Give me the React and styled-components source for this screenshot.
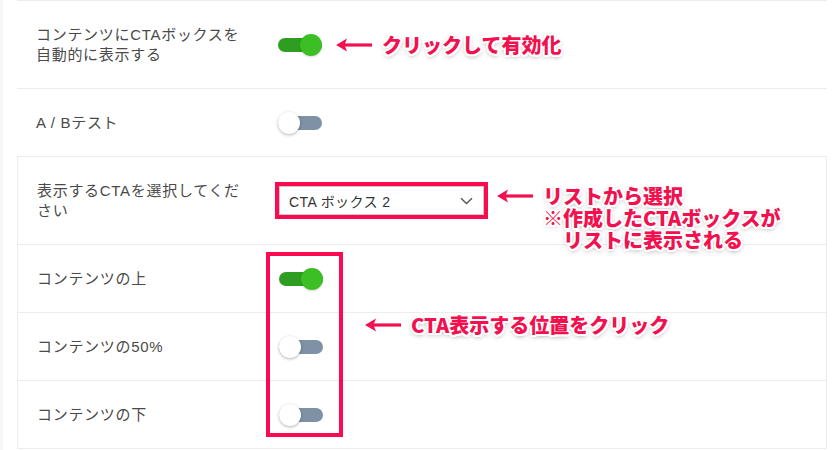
import React from 'react';
import styled, { createGlobalStyle } from 'styled-components';

const GlobalStyle = createGlobalStyle`
  html, body {
    margin: 0;
    padding: 0;
    background: #fff;
  }
  body {
    font-family: "Liberation Sans", "Noto Sans CJK JP", sans-serif;
  }
`;

const Page = styled.div`
  position: relative;
  display: flex;
  width: 840px;
  height: 450px;
  overflow: hidden;
  background: #fff;
`;

const SideStrip = styled.div`
  width: 3px;
  flex-shrink: 0;
  background: #f5f6f9;
`;

const Main = styled.div`
  margin-left: 14px;
  width: 810px;
`;

const Row = styled.div`
  display: flex;
  align-items: center;
  box-sizing: border-box;
  height: ${p => p.$h}px;
  padding-left: 19px;
  border-top: 1px solid #ececec;
`;

const Group = styled.div`
  border: 1px solid #ececec;
  & > ${Row}:first-child {
    border-top: none;
  }
`;

const Label = styled.div`
  width: 212px;
  margin-right: 30px;
  flex-shrink: 0;
  font-size: 15px;
  line-height: 20px;
  letter-spacing: 0.7px;
  color: #4a4a4a;
`;

const Track = styled.div`
  position: relative;
  width: 44px;
  height: 14px;
  border-radius: 7px;
  background: ${p => (p.$on ? '#2f9d20' : '#7e91a5')};
`;

const Knob = styled.div`
  position: absolute;
  top: -4px;
  left: ${p => (p.$on ? '22px' : '0')};
  width: 22px;
  height: 22px;
  border-radius: 50%;
  background: ${p => (p.$on ? '#3bbf25' : '#fff')};
  box-shadow: ${p => (p.$on ? '0 1px 2px rgba(0,0,0,0.15)' : '0 1px 3px rgba(0,0,0,0.3)')};
`;

const Toggle = ({ on }) => (
  <Track $on={on}>
    <Knob $on={on} />
  </Track>
);

const Highlight = styled.div`
  border: 4px solid #fb0a50;
  margin-left: -4px;
`;

const Select = styled.div`
  display: flex;
  align-items: center;
  justify-content: space-between;
  box-sizing: border-box;
  width: 205px;
  height: 29px;
  padding: 0 10px 0 9px;
  border: 1px solid #c9c9c9;
  background: #fff;
  font-size: 14px;
  letter-spacing: 0.4px;
  color: #333;
`;

const ToggleBox = styled.div`
  position: absolute;
  left: 266px;
  top: 252px;
  width: 77px;
  height: 185px;
  box-sizing: border-box;
  border: 4px solid #fb0a50;
`;

const Note = styled.div`
  position: absolute;
  left: ${p => p.$x}px;
  top: ${p => p.$y}px;
  display: flex;
  align-items: flex-start;
  gap: 9px;
`;

const NoteText = styled.div`
  font-family: "Noto Sans CJK JP", sans-serif;
  font-size: 20px;
  font-weight: 900;
  line-height: 22px;
  color: #f2104f;
  white-space: pre;
  text-shadow:
    2px 0 0 #fff, -2px 0 0 #fff, 0 2px 0 #fff, 0 -2px 0 #fff,
    1.5px 1.5px 0 #fff, -1.5px 1.5px 0 #fff, 1.5px -1.5px 0 #fff, -1.5px -1.5px 0 #fff,
    0 2px 5px rgba(0, 0, 0, 0.45);
`;

const ArrowIcon = () => (
  <svg width="38" height="22" viewBox="0 0 38 22">
    <path d="M37 11H5" stroke="#f2104f" strokeWidth="3.2" />
    <path d="M1 11L12 4.5L9.5 11L12 17.5Z" fill="#f2104f" />
  </svg>
);

const Chevron = () => (
  <svg width="13" height="8" viewBox="0 0 13 8">
    <path d="M1 1.2L6.5 6.5L12 1.2" fill="none" stroke="#555" strokeWidth="1.4" />
  </svg>
);

function App() {
  return (
    <Page>
      <GlobalStyle />
      <SideStrip />
      <Main>
        <Row $h={88}>
          <Label>コンテンツにCTAボックスを自動的に表示する</Label>
          <Toggle on />
        </Row>
        <Row $h={68}>
          <Label>A / Bテスト</Label>
          <Toggle />
        </Row>
        <Group>
          <Row $h={87}>
            <Label>表示するCTAを選択してください</Label>
            <Highlight>
              <Select>
                <span>CTA ボックス 2</span>
                <Chevron />
              </Select>
            </Highlight>
          </Row>
          <Row $h={68}>
            <Label>コンテンツの上</Label>
            <Toggle on />
          </Row>
          <Row $h={68}>
            <Label>コンテンツの50%</Label>
            <Toggle />
          </Row>
          <Row $h={68}>
            <Label>コンテンツの下</Label>
            <Toggle />
          </Row>
        </Group>
      </Main>

      <ToggleBox />

      <Note $x={335} $y={34}>
        <ArrowIcon />
        <NoteText>クリックして有効化</NoteText>
      </Note>
      <Note $x={496} $y={185}>
        <ArrowIcon />
        <NoteText>{'リストから選択\n※作成したCTAボックスが\n　リストに表示される'}</NoteText>
      </Note>
      <Note $x={364} $y={314}>
        <ArrowIcon />
        <NoteText>CTA表示する位置をクリック</NoteText>
      </Note>
    </Page>
  );
}

export default App;
